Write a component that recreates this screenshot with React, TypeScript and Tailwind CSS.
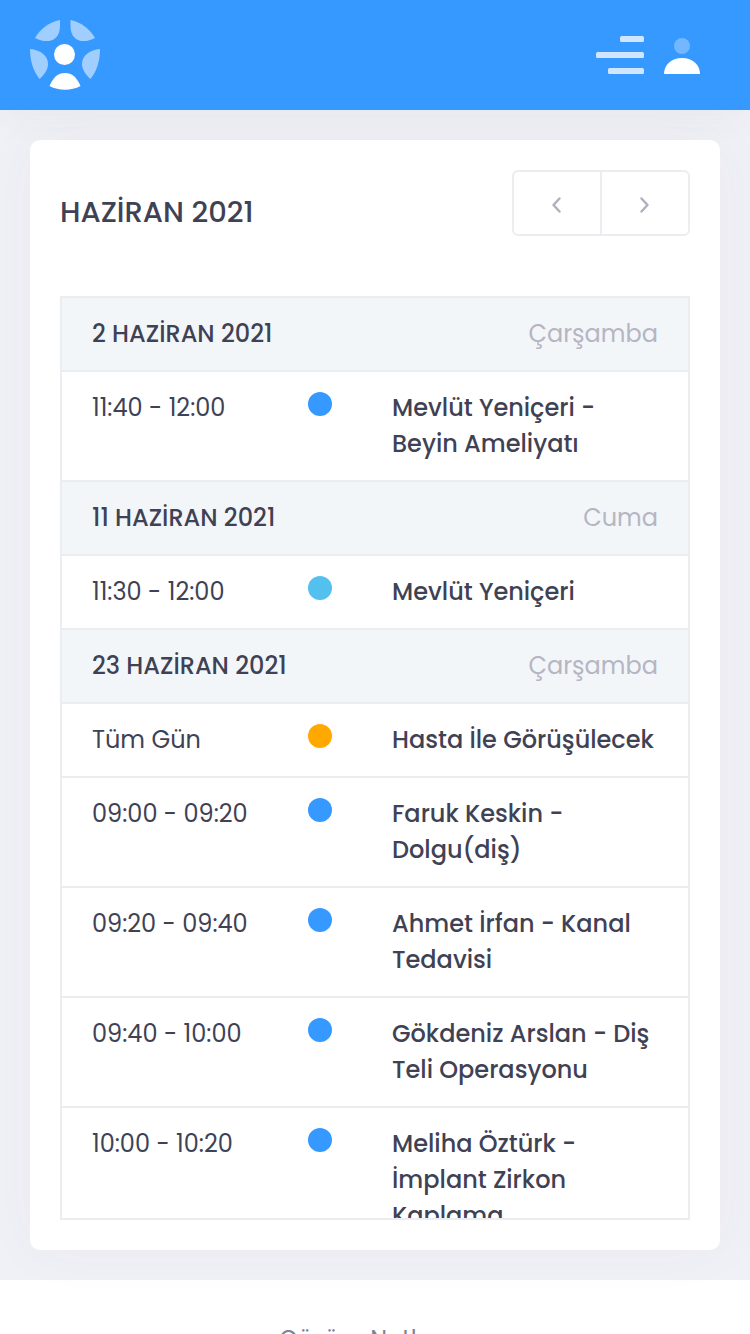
import React from "react";

interface CalendarEvent {
  time: string;
  title: string;
  dot: string;
}

interface Day {
  date: string;
  weekday: string;
  events: CalendarEvent[];
}

const BLUE = "bg-[#3699ff]";

const days: Day[] = [
  {
    date: "2 HAZİRAN 2021",
    weekday: "Çarşamba",
    events: [
      { time: "11:40 - 12:00", title: "Mevlüt Yeniçeri - Beyin Ameliyatı", dot: BLUE },
    ],
  },
  {
    date: "11 HAZİRAN 2021",
    weekday: "Cuma",
    events: [
      { time: "11:30 - 12:00", title: "Mevlüt Yeniçeri", dot: "bg-[#53c0f0]" },
    ],
  },
  {
    date: "23 HAZİRAN 2021",
    weekday: "Çarşamba",
    events: [
      { time: "Tüm Gün", title: "Hasta İle Görüşülecek", dot: "bg-[#ffa800]" },
      { time: "09:00 - 09:20", title: "Faruk Keskin - Dolgu(diş)", dot: BLUE },
      { time: "09:20 - 09:40", title: "Ahmet İrfan - Kanal Tedavisi", dot: BLUE },
      { time: "09:40 - 10:00", title: "Gökdeniz Arslan - Diş Teli Operasyonu", dot: BLUE },
      { time: "10:00 - 10:20", title: "Meliha Öztürk - İmplant Zirkon Kaplama", dot: BLUE },
    ],
  },
];

const Logo = () => (
  <svg className="w-[70px] h-[70px]" viewBox="0 0 70 70" aria-hidden="true">
    <g fill="#fff" fillOpacity="0.53">
      <path d="M30 0C19 2 10 9 5 18C16 24 30 22 30 6Z" />
      <path d="M40.500 0C51 2 60 9 65 18C54 24 40.500 22 40.500 6Z" />
      <path d="M0 29C11 30 18 36 18 44C18 50 14 55 9.500 59C3 51 0 40 0 29Z" />
      <path d="M70 29C59 30 52 36 52 44C52 50 56 55 60.500 59C67 51 70 40 70 29Z" />
    </g>
    <circle cx="34.500" cy="34.500" r="10.500" fill="#fff" />
    <path d="M19.500 66C23 57.500 28 53 35 53C42 53 47 57.500 50.500 66C41 71 29 71 19.500 66Z" fill="#fff" />
  </svg>
);

const MenuIcon = () => (
  <svg className="w-12 h-[38px]" viewBox="0 0 48 38" fill="#d0e6ff">
    <rect x="24" width="24" height="6" rx="1.500" />
    <rect y="16" width="48" height="6" rx="1.500" />
    <rect x="12" y="32" width="36" height="6" rx="1.500" />
  </svg>
);

const UserIcon = () => (
  <svg className="w-9 h-[38px]" viewBox="0 0 36 38" fill="#fff">
    <circle cx="18" cy="10" r="8" fillOpacity="0.3" />
    <path d="M0 38C0 29 7 22 18 22C29 22 36 29 36 38Z" />
  </svg>
);

const Chevron = ({ d }: { d: string }) => (
  <svg
    className="w-4 h-5"
    viewBox="0 0 16 20"
    fill="none"
    stroke="#b0b1bf"
    strokeWidth="2.500"
    strokeLinecap="round"
    strokeLinejoin="round"
  >
    <path d={d} />
  </svg>
);

export default function App() {
  return (
    <div className="min-h-screen bg-white font-[Poppins,Inter,'Noto_Sans',sans-serif] text-2xl leading-9 text-[#3f4254]">
      <div className="bg-[#f0f1f6]">
        <header className="relative z-10 flex h-[110px] items-center justify-between bg-[#3699ff] pl-[30px] pr-[50px] shadow-[0_10px_30px_rgba(82,63,105,0.04)]">
          <a href="#" aria-label="Ana sayfa">
            <Logo />
          </a>
          <div className="flex items-center gap-5">
            <button type="button" aria-label="Menü">
              <MenuIcon />
            </button>
            <button type="button" aria-label="Profil">
              <UserIcon />
            </button>
          </div>
        </header>

        <main className="p-[30px]">
          <section className="rounded-[10px] bg-white p-[30px] shadow-[0_0_60px_rgba(82,63,105,0.04)]">
            {/* Toolbar */}
            <div className="mb-[60px] flex items-start justify-between">
              <h2 className="pt-6 text-[29px] leading-9 font-medium">HAZİRAN 2021</h2>
              <div className="flex h-[66px] rounded-md border-2 border-[#ebedf0]">
                <button
                  type="button"
                  aria-label="Önceki ay"
                  className="flex w-[86px] items-center justify-center pt-1"
                >
                  <Chevron d="M10.500 3.500L4.500 10L10.500 16.500" />
                </button>
                <button
                  type="button"
                  aria-label="Sonraki ay"
                  className="flex w-[88px] items-center justify-center border-l-2 border-[#ebedf0] pt-1"
                >
                  <Chevron d="M4.500 3.500L10.500 10L4.500 16.500" />
                </button>
              </div>
            </div>

            {/* Event list */}
            <div className="h-[924px] overflow-hidden border-2 border-[#ebedf0]">
              <table className="w-full table-fixed border-separate border-spacing-0 text-left">
                <colgroup>
                  <col className="w-[216px]" />
                  <col className="w-[84px]" />
                  <col />
                </colgroup>
                {days.map((day) => (
                  <tbody key={day.date}>
                    <tr>
                      <th
                        colSpan={3}
                        className="border-b-2 border-[#ebedf0] bg-[#f3f6f9] px-[30px] py-[18px] font-medium"
                      >
                        <div className="flex justify-between">
                          <span>{day.date}</span>
                          <span className="font-normal text-[#b5b5c3]">{day.weekday}</span>
                        </div>
                      </th>
                    </tr>
                    {day.events.map((event) => (
                      <tr key={event.time} className="align-top">
                        <td className="border-b-2 border-[#ebedf0] py-[18px] pl-[30px] whitespace-nowrap">
                          {event.time}
                        </td>
                        <td className="border-b-2 border-[#ebedf0] px-[30px] py-5">
                          <div className={`h-6 w-6 rounded-full ${event.dot}`} />
                        </td>
                        <td className="border-b-2 border-[#ebedf0] px-[30px] py-[18px] font-medium">
                          {event.title}
                        </td>
                      </tr>
                    ))}
                  </tbody>
                ))}
              </table>
            </div>
          </section>
        </main>
      </div>

      <footer className="h-[54px] overflow-hidden pt-[42px] text-center text-[#7e8299]">
        Çözüm Netleme
      </footer>
    </div>
  );
}
